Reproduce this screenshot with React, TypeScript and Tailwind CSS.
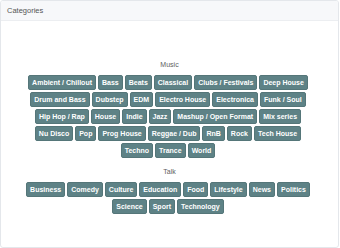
const music = [
  "Ambient / Chillout",
  "Bass",
  "Beats",
  "Classical",
  "Clubs / Festivals",
  "Deep House",
  "Drum and Bass",
  "Dubstep",
  "EDM",
  "Electro House",
  "Electronica",
  "Funk / Soul",
  "Hip Hop / Rap",
  "House",
  "Indie",
  "Jazz",
  "Mashup / Open Format",
  "Mix series",
  "Nu Disco",
  "Pop",
  "Prog House",
  "Reggae / Dub",
  "RnB",
  "Rock",
  "Tech House",
  "Techno",
  "Trance",
  "World",
];

const talk = [
  "Business",
  "Comedy",
  "Culture",
  "Education",
  "Food",
  "Lifestyle",
  "News",
  "Politics",
  "Science",
  "Sport",
  "Technology",
];

function Group({ title, items }: { title: string; items: string[] }) {
  return (
    <div>
      <h3 className="text-center text-[7px] leading-[9px] text-[#606060]">{title}</h3>
      <div className="mx-auto mt-[6px] flex w-[293px] flex-wrap justify-center gap-x-[2px] gap-y-[2px] pr-[3px]">
        {items.map((t) => (
          <span
            key={t}
            className="rounded-[2px] border border-[#557679] bg-[#5e8286] px-[3px] py-[2px] text-[7px] font-bold leading-[9px] text-white"
          >
            {t}
          </span>
        ))}
      </div>
    </div>
  );
}

export default function App() {
  return (
    <div className="h-[248px] w-[340px] bg-white font-['Liberation_Sans',Arial,sans-serif]">
      <div className="h-full w-[339px] overflow-hidden rounded-[3px] border border-[#e4e7eb]">
        <div className="flex h-[20px] items-center border-b border-[#eceef1] bg-[#f7f8fa] px-[6px] text-[7.5px] text-[#555]">
          Categories
        </div>
        <div className="pt-[39px]">
          <Group title="Music" items={music} />
          <div className="mt-[9px]">
            <Group title="Talk" items={talk} />
          </div>
        </div>
      </div>
    </div>
  );
}
